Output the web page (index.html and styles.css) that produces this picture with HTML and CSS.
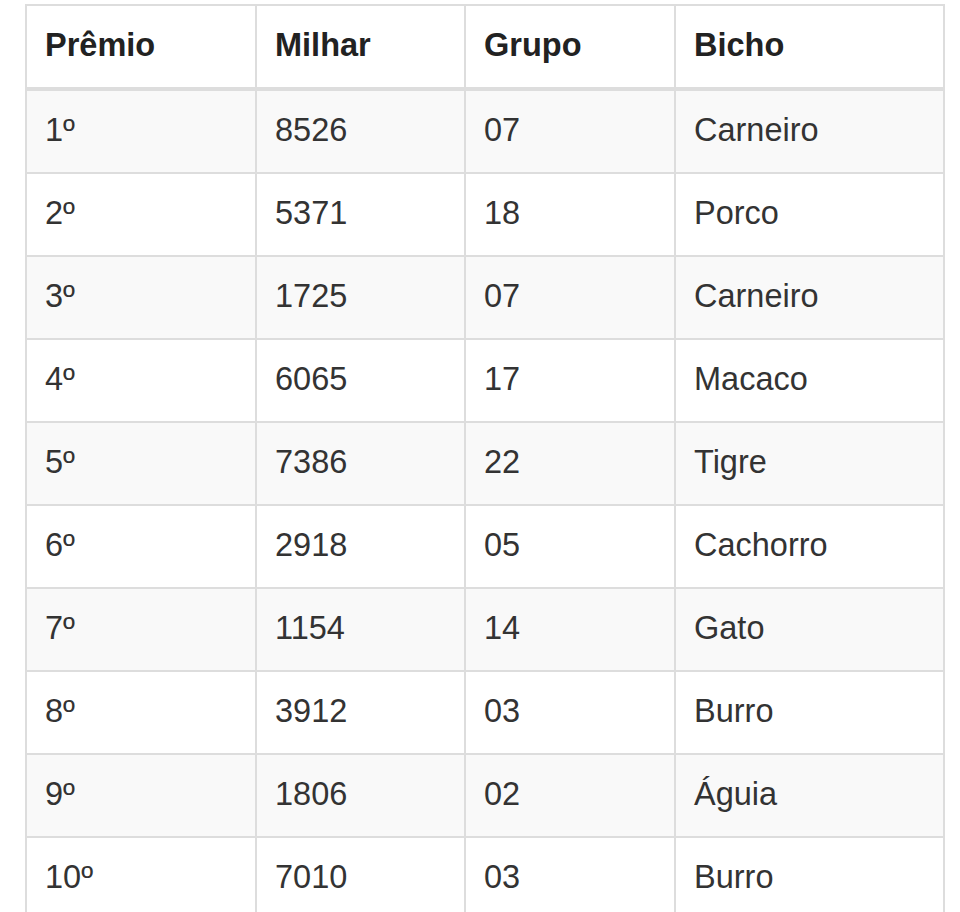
FILE: index.html
```html
<!DOCTYPE html>
<html lang="pt">
<head>
<meta charset="utf-8">
<title>Resultado</title>
<link rel="stylesheet" href="styles.css">
</head>
<body>
<div class="wrap">
<table class="results">
<thead>
<tr>
<th class="c1">Prêmio</th>
<th class="c2">Milhar</th>
<th class="c3">Grupo</th>
<th class="c4">Bicho</th>
</tr>
</thead>
<tbody>
<tr><td>1º</td><td>8526</td><td>07</td><td>Carneiro</td></tr>
<tr><td>2º</td><td>5371</td><td>18</td><td>Porco</td></tr>
<tr><td>3º</td><td>1725</td><td>07</td><td>Carneiro</td></tr>
<tr><td>4º</td><td>6065</td><td>17</td><td>Macaco</td></tr>
<tr><td>5º</td><td>7386</td><td>22</td><td>Tigre</td></tr>
<tr><td>6º</td><td>2918</td><td>05</td><td>Cachorro</td></tr>
<tr><td>7º</td><td>1154</td><td>14</td><td>Gato</td></tr>
<tr><td>8º</td><td>3912</td><td>03</td><td>Burro</td></tr>
<tr><td>9º</td><td>1806</td><td>02</td><td>Águia</td></tr>
<tr><td>10º</td><td>7010</td><td>03</td><td>Burro</td></tr>
</tbody>
</table>
</div>
</body>
</html>
```

FILE: styles.css
```css
html, body {
  margin: 0;
  padding: 0;
  background: #fff;
}
body {
  font-family: "Liberation Sans", Arial, sans-serif;
  color: #333;
}
.wrap {
  padding: 4px 15px 0 25px;
}
.results {
  width: 920px;
  table-layout: fixed;
  border-collapse: separate;
  border-spacing: 0;
  border-left: 2px solid #ddd;
  border-top: 2px solid #ddd;
  font-size: 32.5px;
}
.results th,
.results td {
  box-sizing: border-box;
  height: 83px;
  padding: 0 17px 2px 18px;
  text-align: left;
  vertical-align: middle;
  border-right: 2px solid #ddd;
  border-bottom: 2px solid #ddd;
  line-height: 1;
}
.results th {
  font-weight: bold;
  height: 85px;
  border-bottom-width: 4px;
  color: #222;
}
.results .c1 { width: 230px; }
.results .c2 { width: 209px; }
.results .c3 { width: 210px; }
.results .c4 { width: 269px; }
.results tbody tr:nth-child(odd) {
  background: #f9f9f9;
}
```
